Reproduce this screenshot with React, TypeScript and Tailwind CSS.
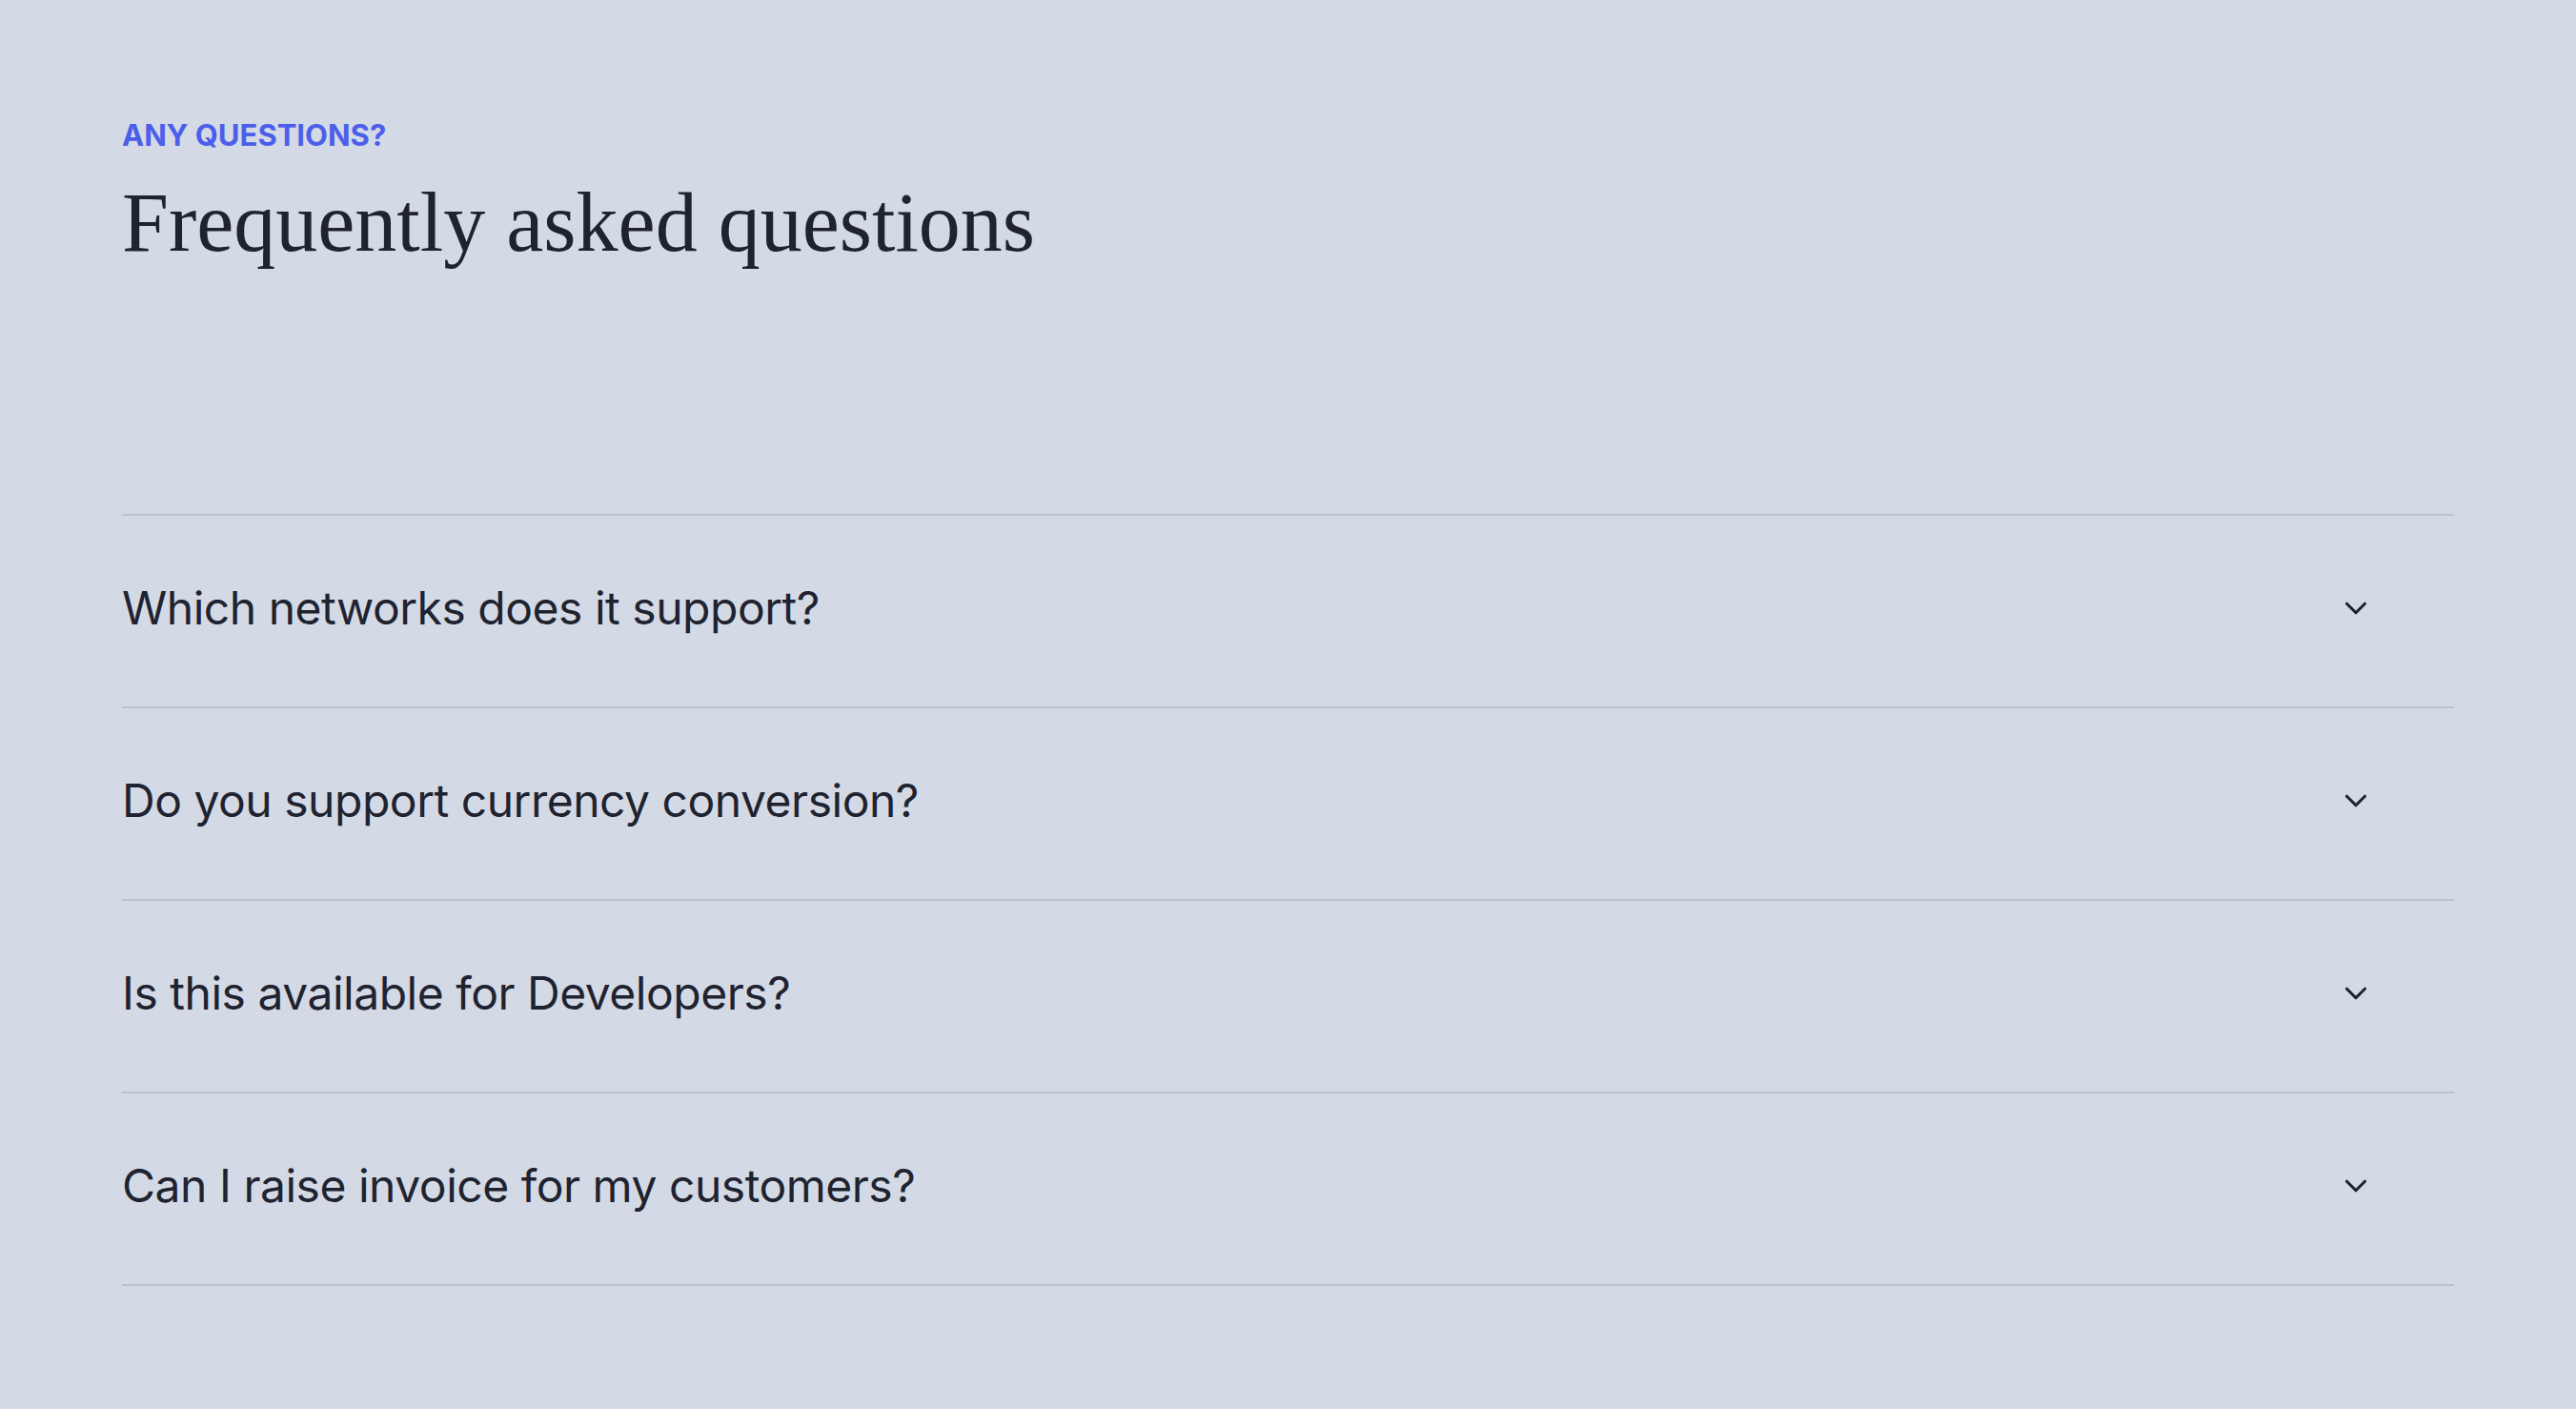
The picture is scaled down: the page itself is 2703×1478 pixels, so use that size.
import { ChevronDown } from "lucide-react"

const questions = [
  "Which networks does it support?",
  "Do you support currency conversion?",
  "Is this available for Developers?",
  "Can I raise invoice for my customers?",
]

export default function App() {
  return (
    <div className="min-h-screen bg-[#d4dae5] px-[128px] pt-[122px] font-['Inter',sans-serif] text-[#1f2330]">
      <p className="text-[31px] font-bold leading-[40px] text-[#4c5fea]">ANY QUESTIONS?</p>
      <h2 className="mt-[24px] font-['Liberation_Serif',serif] text-[88px] leading-[96px] text-[#1f2330]">
        Frequently asked questions
      </h2>
      <div className="mt-[257px] border-t-2 border-[#bcc1cc]">
        {questions.map((q) => (
          <button
            key={q}
            className="flex h-[202px] w-full items-center justify-between border-b-2 border-[#bcc1cc] pr-[84px] pb-[6px] text-left"
          >
            <span className="text-[48px] font-normal tracking-[-0.01em]">{q}</span>
            <ChevronDown size={38} strokeWidth={2} className="text-[#1f2330]" />
          </button>
        ))}
      </div>
    </div>
  )
}
